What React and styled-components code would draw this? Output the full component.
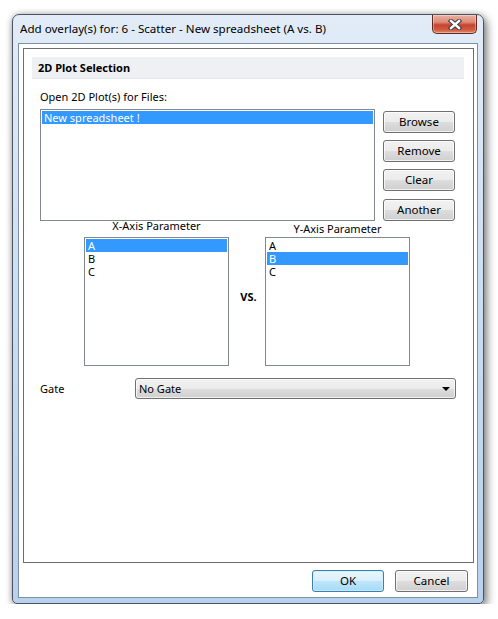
import React from 'react';
import styled, { createGlobalStyle } from 'styled-components';

const GlobalStyle = createGlobalStyle`
  html, body {
    margin: 0;
    background: #ffffff;
  }
  body {
    font-family: "Noto Sans", "Open Sans", sans-serif;
    font-size: 11px;
    color: #000;
  }
`;

const files = ['New spreadsheet !'];
const params = ['A', 'B', 'C'];

export default function App() {
  return (
    <>
      <GlobalStyle />
      <Page>
        <Window>
          <TitleBar>
            <Title>Add overlay(s) for: 6 - Scatter - New spreadsheet (A vs. B)</Title>
            <CloseButton aria-label="Close">
              <svg width="14" height="11" viewBox="0 0 14 11">
                <path d="M3 2 L11 9 M11 2 L3 9" stroke="#3b3b48" strokeWidth="4.4" strokeLinecap="square" />
                <path d="M3 2 L11 9 M11 2 L3 9" stroke="#ffffff" strokeWidth="2.4" strokeLinecap="square" />
              </svg>
            </CloseButton>
          </TitleBar>
          <Client>
            <Group>
              <GroupHeader>2D Plot Selection</GroupHeader>
              <Content>
                <FieldLabel>Open 2D Plot(s) for Files:</FieldLabel>
                <FilesRow>
                  <ListBox $width={335} $height={112}>
                    {files.map((f) => (
                      <ListItem key={f} $selected>{f}</ListItem>
                    ))}
                  </ListBox>
                  <SideButtons>
                    <Button>Browse</Button>
                    <Button>Remove</Button>
                    <Button>Clear</Button>
                    <Button $gap={8}>Another</Button>
                  </SideButtons>
                </FilesRow>
                <AxisRow>
                  <AxisColumn>
                    <AxisLabel>X-Axis Parameter</AxisLabel>
                    <ListBox $width={145} $height={129}>
                      {params.map((p) => (
                        <ListItem key={p} $selected={p === 'A'}>{p}</ListItem>
                      ))}
                    </ListBox>
                  </AxisColumn>
                  <VsColumn>VS.</VsColumn>
                  <AxisColumn>
                    <AxisLabel $offset={3}>Y-Axis Parameter</AxisLabel>
                    <ListBox $width={145} $height={129}>
                      {params.map((p) => (
                        <ListItem key={p} $selected={p === 'B'}>{p}</ListItem>
                      ))}
                    </ListBox>
                  </AxisColumn>
                </AxisRow>
                <GateRow>
                  <GateLabel>Gate</GateLabel>
                  <Select>
                    <span>No Gate</span>
                    <Arrow />
                  </Select>
                </GateRow>
              </Content>
            </Group>
            <Footer>
              <Button $default $w={72}>OK</Button>
              <Button $w={73}>Cancel</Button>
            </Footer>
          </Client>
        </Window>
      </Page>
    </>
  );
}

const Page = styled.div`
  padding: 14px 0 0 12px;
`;

const Window = styled.div`
  box-sizing: border-box;
  width: 472px;
  height: 590px;
  display: flex;
  flex-direction: column;
  padding: 0 5px 5px 5px;
  border: 1px solid #4b5460;
  border-radius: 7px 7px 5px 5px;
  background: linear-gradient(180deg, #e2ecf8 0%, #d3e3f4 30%, #c2d8ef 70%, #b8d1ed 100%);
  box-shadow: 3px 4px 10px rgba(0, 0, 0, 0.45), 0 0 6px rgba(0, 0, 0, 0.25);
`;

const TitleBar = styled.div`
  height: 28px;
  display: flex;
  align-items: flex-start;
  justify-content: space-between;
`;

const Title = styled.div`
  margin: 6px 0 0 2px;
  line-height: 16px;
  font-size: 11.6px;
  color: #000;
  white-space: nowrap;
`;

const CloseButton = styled.div`
  width: 45px;
  height: 19px;
  box-sizing: border-box;
  margin-right: 1px;
  display: flex;
  align-items: center;
  justify-content: center;
  border: 1px solid #5f2a24;
  border-top: none;
  border-radius: 0 0 5px 5px;
  background: linear-gradient(180deg, #eab0a3 0%, #dd8a76 40%, #c6432e 55%, #cf5a3e 80%, #e08663 100%);
  box-shadow: inset 0 0 0 1px rgba(255, 255, 255, 0.35);
`;

const Client = styled.div`
  flex: 1;
  display: flex;
  flex-direction: column;
  background: #ffffff;
  border: 1px solid #7e90a7;
`;

const Group = styled.div`
  height: 515px;
  box-sizing: border-box;
  margin: 4px 3px 0 4px;
  padding: 8px 9px 0 8px;
  border: 1px solid #6e6e6e;
`;

const GroupHeader = styled.div`
  height: 22px;
  box-sizing: border-box;
  padding-left: 6px;
  line-height: 21px;
  font-weight: bold;
  background: #eff0f2;
  border-bottom: 1px solid #e2e5ea;
`;

const Content = styled.div`
  padding-left: 8px;
`;

const FieldLabel = styled.div`
  margin-top: 10px;
  height: 16px;
  line-height: 16px;
`;

const FilesRow = styled.div`
  margin-top: 4px;
  display: flex;
  gap: 8px;
`;

const ListBox = styled.div`
  width: ${(p) => p.$width}px;
  height: ${(p) => p.$height}px;
  box-sizing: border-box;
  padding: 1px;
  border: 1px solid #828790;
  background: #fff;
`;

const ListItem = styled.div`
  height: 13px;
  line-height: 13px;
  padding-left: 2px;
  white-space: nowrap;
  background: ${(p) => (p.$selected ? '#3399ff' : 'transparent')};
  color: ${(p) => (p.$selected ? '#ffffff' : '#000000')};
`;

const SideButtons = styled.div`
  padding-top: 2px;
  display: flex;
  flex-direction: column;
  gap: 7px;
`;

const Button = styled.div`
  width: ${(p) => p.$w || 72}px;
  height: 22px;
  box-sizing: border-box;
  margin-top: ${(p) => (p.$gap ? p.$gap - 7 : 0)}px;
  display: flex;
  align-items: center;
  justify-content: center;
  border: 1px solid ${(p) => (p.$default ? '#3c7fb1' : '#707070')};
  border-radius: 3px;
  background: ${(p) =>
    p.$default
      ? 'linear-gradient(180deg, #eaf6fd 0%, #d9f0fc 50%, #bee6fd 51%, #a7d9f5 100%)'
      : 'linear-gradient(180deg, #f2f2f2 0%, #ebebeb 50%, #dddddd 51%, #cfcfcf 100%)'};
  box-shadow: inset 0 0 0 1px ${(p) => (p.$default ? 'rgba(200, 240, 255, 0.8)' : 'rgba(255, 255, 255, 0.7)')};
  font-size: 11.5px;
  line-height: 14px;
`;

const AxisRow = styled.div`
  margin: -1px 0 0 44px;
  display: flex;
`;

const AxisColumn = styled.div`
  display: flex;
  flex-direction: column;
  align-items: center;
`;

const AxisLabel = styled.div`
  height: 17px;
  box-sizing: border-box;
  padding-top: ${(p) => p.$offset || 0}px;
  line-height: 12px;
  white-space: nowrap;
`;

const VsColumn = styled.div`
  width: 36px;
  display: flex;
  align-items: center;
  justify-content: center;
  padding: 17px 0 10px 3px;
  box-sizing: border-box;
  font-weight: bold;
`;

const GateRow = styled.div`
  margin-top: 12px;
  display: flex;
  align-items: center;
`;

const GateLabel = styled.div`
  width: 95px;
`;

const Select = styled.div`
  width: 321px;
  height: 21px;
  box-sizing: border-box;
  padding: 0 4px 0 3px;
  display: flex;
  align-items: center;
  justify-content: space-between;
  border: 1px solid #707070;
  border-radius: 3px;
  background: linear-gradient(180deg, #f2f2f2 0%, #ebebeb 50%, #dddddd 51%, #cfcfcf 100%);
  box-shadow: inset 0 0 0 1px rgba(255, 255, 255, 0.7);
`;

const Arrow = styled.span`
  width: 0;
  height: 0;
  margin-right: 1px;
  border-left: 4px solid transparent;
  border-right: 4px solid transparent;
  border-top: 4px solid #000;
`;

const Footer = styled.div`
  flex: 1;
  display: flex;
  justify-content: flex-end;
  align-items: flex-start;
  gap: 11px;
  padding: 7px 9px 0 0;
`;
